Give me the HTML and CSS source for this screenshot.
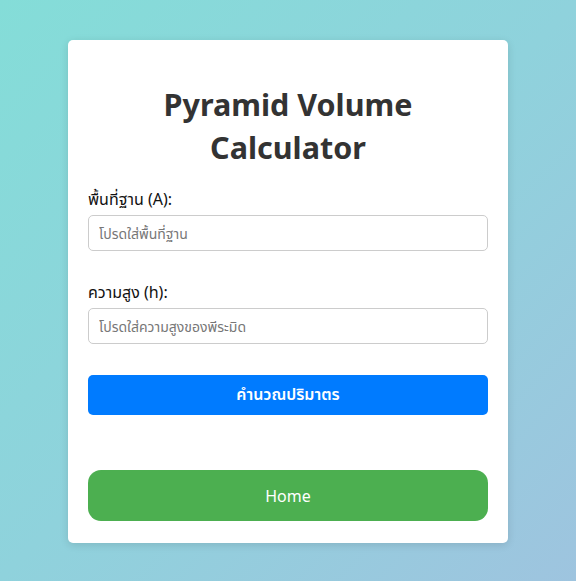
FILE: index.html
```html
<!DOCTYPE html>
<html lang="th">
<head>
<meta charset="utf-8">
<title>Pyramid Volume Calculator</title>
<link rel="stylesheet" href="styles.css">
</head>
<body>
<div class="card">
  <h1 class="title">Pyramid Volume Calculator</h1>
  <div class="group">
    <label class="label" for="area">พื้นที่ฐาน (A):</label>
    <input class="input" id="area" type="text" placeholder="โปรดใส่พื้นที่ฐาน">
  </div>
  <div class="group">
    <label class="label" for="height">ความสูง (h):</label>
    <input class="input" id="height" type="text" placeholder="โปรดใส่ความสูงของพีระมิด">
  </div>
  <button class="btn-calc" type="button">คำนวณปริมาตร</button>
  <button class="btn-home" type="button">Home</button>
</div>
</body>
</html>
```

FILE: styles.css
```css
html, body {
  margin: 0;
  padding: 0;
  height: 100%;
}
body {
  font-family: "Noto Sans", "Noto Sans Thai", "Liberation Sans", sans-serif;
  background: linear-gradient(135deg, #84ddd8 0%, #8fd2dc 50%, #9ec4df 100%);
  display: flex;
  justify-content: center;
  align-items: flex-start;
  padding-top: 40px;
  box-sizing: border-box;
}
.card {
  width: 440px;
  box-sizing: border-box;
  background: #fff;
  border-radius: 5px;
  padding: 20px 20px 22px;
  box-shadow: 0 2px 8px rgba(0, 0, 0, 0.12);
  display: flex;
  flex-direction: column;
}
.title {
  font-size: 30.5px;
  font-weight: 700;
  color: #333;
  text-align: center;
  line-height: 43px;
  margin: 23px 30px 19px;
}
.group {
  display: flex;
  flex-direction: column;
  margin-bottom: 30px;
}
.label {
  font-size: 16px;
  color: #111;
  line-height: 22px;
  margin-bottom: 5px;
}
.input {
  height: 36px;
  box-sizing: border-box;
  border: 1px solid #ccc;
  border-radius: 5px;
  padding: 0 10px;
  font-family: inherit;
  font-size: 14px;
  color: #333;
  outline: none;
}
.input::placeholder {
  color: #777;
}
.btn-calc {
  height: 40px;
  border: none;
  border-radius: 5px;
  background: #007bff;
  color: #fff;
  font-family: inherit;
  font-size: 16px;
  font-weight: 600;
  margin-top: 1px;
  margin-bottom: 55px;
  cursor: pointer;
}
.btn-home {
  height: 51px;
  border: none;
  border-radius: 13px;
  background: #4caf50;
  color: #fff;
  font-family: inherit;
  font-size: 16px;
  cursor: pointer;
}
```
